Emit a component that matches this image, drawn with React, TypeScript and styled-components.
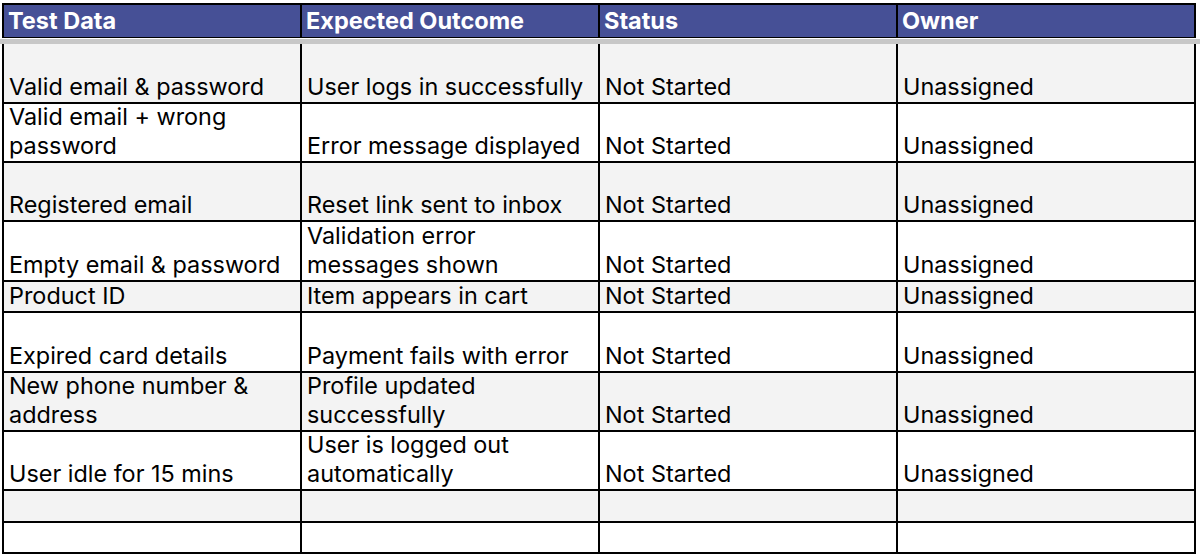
import React from 'react';
import styled, { createGlobalStyle } from 'styled-components';

const GlobalStyle = createGlobalStyle`
  html, body {
    margin: 0;
    padding: 0;
    background: #ffffff;
  }
  body {
    font-family: Inter, "Liberation Sans", Arial, sans-serif;
    color: #000;
  }
`;

const Sheet = styled.div`
  width: 1200px;
  height: 560px;
  padding-top: 3px;
  box-sizing: border-box;
  overflow: hidden;
`;

const HeaderRow = styled.div`
  display: grid;
  grid-template-columns: 296px 296px 296px 296px;
  column-gap: 2px;
  width: 1194px;
  height: 35px;
  margin-left: 2px;
  box-sizing: border-box;
  border: 2px solid #000;
  background: #000;
`;

const HeaderCell = styled.div`
  background: #465096;
  color: #fff;
  font-weight: 700;
  font-size: 23.5px;
  line-height: 32px;
  padding-left: 4px;
  white-space: nowrap;
`;

// frozen-row separator, runs the full width of the window
const FreezeBar = styled.div`
  height: 5px;
  margin-top: 1px;
  background: #c7c7c7;
`;

const Body = styled.div`
  width: 1194px;
  margin-left: 2px;
  box-sizing: border-box;
  border-left: 2px solid #000;
  border-right: 2px solid #000;
`;

const Row = styled.div<{ $shaded: boolean; $height: number }>`
  display: grid;
  grid-template-columns: 296px 296px 296px 296px;
  grid-template-rows: minmax(0, 1fr);
  column-gap: 2px;
  height: ${p => p.$height}px;
  box-sizing: border-box;
  border-bottom: 2px solid #000;
  background: #000;

  & > div {
    background: ${p => (p.$shaded ? '#f3f3f3' : '#ffffff')};
  }
`;

const Cell = styled.div`
  display: flex;
  flex-direction: column;
  justify-content: flex-end;
  min-height: 0;
  padding: 0 3px 1px 5px;
  font-size: 23.4px;
  line-height: 29px;
  white-space: pre-line;
`;

type Case = {
  data: string;
  outcome: string;
  status: string;
  owner: string;
  height: number;
};

const cases: Case[] = [
  { data: 'Valid email & password', outcome: 'User logs in successfully', status: 'Not Started', owner: 'Unassigned', height: 60 },
  { data: 'Valid email + wrong\npassword', outcome: 'Error message displayed', status: 'Not Started', owner: 'Unassigned', height: 59 },
  { data: 'Registered email', outcome: 'Reset link sent to inbox', status: 'Not Started', owner: 'Unassigned', height: 59 },
  { data: 'Empty email & password', outcome: 'Validation error\nmessages shown', status: 'Not Started', owner: 'Unassigned', height: 60 },
  { data: 'Product ID', outcome: 'Item appears in cart', status: 'Not Started', owner: 'Unassigned', height: 31 },
  { data: 'Expired card details', outcome: 'Payment fails with error', status: 'Not Started', owner: 'Unassigned', height: 60 },
  { data: 'New phone number &\naddress', outcome: 'Profile updated\nsuccessfully', status: 'Not Started', owner: 'Unassigned', height: 59 },
  { data: 'User idle for 15 mins', outcome: 'User is logged out\nautomatically', status: 'Not Started', owner: 'Unassigned', height: 59 },
  { data: '', outcome: '', status: '', owner: '', height: 32 },
  { data: '', outcome: '', status: '', owner: '', height: 31 },
];

const columns = ['Test Data', 'Expected Outcome', 'Status', 'Owner'];

const App: React.FC = () => {
  return (
    <>
      <GlobalStyle />
      <Sheet>
        <HeaderRow>
          {columns.map(c => (
            <HeaderCell key={c}>{c}</HeaderCell>
          ))}
        </HeaderRow>
        <FreezeBar />
        <Body>
          {cases.map((row, i) => (
            <Row key={i} $shaded={i % 2 === 0} $height={row.height}>
              <Cell>{row.data}</Cell>
              <Cell>{row.outcome}</Cell>
              <Cell>{row.status}</Cell>
              <Cell>{row.owner}</Cell>
            </Row>
          ))}
        </Body>
      </Sheet>
    </>
  );
};

export default App;
